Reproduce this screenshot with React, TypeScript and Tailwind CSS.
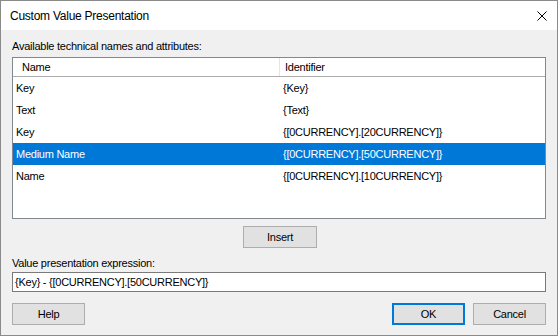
import React from 'react'

export default function App() {
  const rows = [
    { name: 'Key', id: '{Key}' },
    { name: 'Text', id: '{Text}' },
    { name: 'Key', id: '{[0CURRENCY].[20CURRENCY]}' },
    { name: 'Medium Name', id: '{[0CURRENCY].[50CURRENCY]}' },
    { name: 'Name', id: '{[0CURRENCY].[10CURRENCY]}' },
  ]
  const selected = 3

  return (
    <div className="w-[558px] h-[336px] bg-white font-['Liberation_Sans',Arial,sans-serif] text-black">
      <div className="w-[558px] h-[336px] border border-[#8a8a8a] bg-[#f0f0f0] flex flex-col">
        {/* Title bar */}
        <div className="h-[29px] bg-white flex items-center justify-between pl-[9px] pr-[10px]">
          <span className="text-[12px] tracking-[-0.25px]">Custom Value Presentation</span>
          <svg width="10" height="10" viewBox="0 0 10 10" className="block">
            <path d="M0.5 0.5 L9.5 9.5 M9.5 0.5 L0.5 9.5" stroke="#000" strokeWidth="1" fill="none" />
          </svg>
        </div>

        {/* Body */}
        <div className="flex-1 flex flex-col px-[11px] pt-[9px] text-[11px] tracking-[-0.25px]">
          <div className="h-[14px] leading-[14px]">Available technical names and attributes:</div>

          {/* List */}
          <div className="mt-[4px] h-[162px] border border-[#828790] bg-white flex flex-col">
            <div className="h-[19px] flex border-b border-[#acacac] leading-[18px]">
              <div className="w-[267px] pl-[9px] border-r border-[#e5e5e5]">Name</div>
              <div className="flex-1 pl-[5px]">Identifier</div>
            </div>
            {rows.map((row, i) => (
              <div
                key={i}
                className={`h-[22px] flex items-center ${i === selected ? 'bg-[#0078d7] text-white' : ''}`}
              >
                <div className="w-[267px] pl-[3px]">{row.name}</div>
                <div className="flex-1 pl-[3px]">{row.id}</div>
              </div>
            ))}
          </div>

          <button className="mt-[7px] ml-[231px] w-[74px] h-[22px] border border-[#adadad] bg-[#e1e1e1] flex items-center justify-center">
            Insert
          </button>

          <div className="mt-[8px] h-[14px] leading-[14px]">Value presentation expression:</div>
          <div className="mt-[2px] h-[20px] border border-[#7a7a7a] bg-white pl-[2px] leading-[18px]">
            {'{Key} - {[0CURRENCY].[50CURRENCY]}'}
          </div>

          {/* Buttons */}
          <div className="mt-[11px] flex">
            <button className="w-[73px] h-[22px] border border-[#adadad] bg-[#e1e1e1] flex items-center justify-center">
              Help
            </button>
            <button className="ml-auto w-[73px] h-[22px] border-2 border-[#0078d7] bg-[#e1e1e1] flex items-center justify-center">
              OK
            </button>
            <button className="ml-[8px] w-[73px] h-[22px] border border-[#adadad] bg-[#e1e1e1] flex items-center justify-center">
              Cancel
            </button>
          </div>
        </div>
      </div>
    </div>
  )
}
